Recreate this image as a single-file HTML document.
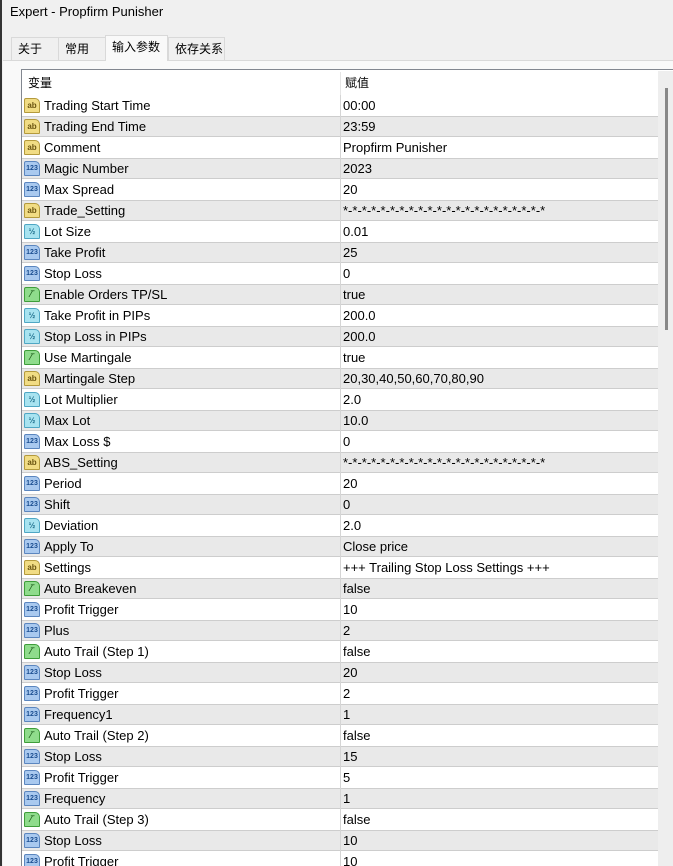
<!DOCTYPE html>
<html><head><meta charset="utf-8"><style>
*{margin:0;padding:0;box-sizing:border-box}
body{width:673px;height:866px;overflow:hidden;background:#f0f0f0;font-family:"Segoe UI","Liberation Sans","Noto Sans CJK SC",sans-serif;font-size:13px;color:#000;position:relative}
.left{position:absolute;left:0;top:0;width:2px;height:866px;background:#333}
.title{position:absolute;left:10px;top:4px;font-size:13px;color:#000}
.tab{position:absolute;top:37px;height:23px;border:1px solid #d9d9d9;border-bottom:none;background:#f0f0f0;padding:2px 0 0 6px;font-family:"Noto Sans CJK SC",sans-serif;font-size:12px}
.tab.act{top:35px;height:26px;background:#f9f9f9;z-index:2}
.panel{position:absolute;left:3px;top:60px;width:670px;height:806px;background:#f9f9f9;border-top:1px solid #d9d9d9}
.tbl{position:absolute;left:21px;top:69px;width:652px;height:797px;border:1px solid #828790;border-right:none;border-bottom:none;background:#fff;overflow:hidden}
.hdr{position:absolute;left:0;top:0;width:636px;height:25px;background:#fff}
.hdr span{position:absolute;top:4px;font-family:"Noto Sans CJK SC",sans-serif;font-size:12px}
.hdr i{position:absolute;left:318px;top:2px;width:1px;height:23px;background:#e5e5e5}
.sb{position:absolute;left:636px;top:1px;width:16px;height:796px;background:#eeeeee}
.th{position:absolute;left:643px;top:18px;width:3px;height:242px;background:#888}
.row{position:absolute;left:0;width:636px;height:21px;line-height:21px}
.row.g{background:#e9e9e9;box-shadow:inset 0 1px 0 #cdcdcd,inset 0 -1px 0 #cdcdcd}
.row .n{position:absolute;left:22px;top:0;white-space:nowrap}
.row .v{position:absolute;left:321px;top:0;white-space:nowrap}
.row .d{position:absolute;left:318px;top:0;width:1px;height:21px;background:#d5d5d5}
.ic{position:absolute;left:2px;top:3px;width:16px;height:15px;border:1px solid;border-radius:2px 5px 1px 1px;font-size:8px;font-weight:bold;line-height:13px;text-align:center;font-family:"Liberation Sans",sans-serif}
.ab{background:#f1dc84;border-color:#b49a3c;color:#6a5410}
.nm{background:#a9c9ef;border-color:#5b86bf;color:#1a4d90;font-size:7px}
.dv{background:#a8e3f0;border-color:#4fa7c4;color:#1c6d8a}
.bl{background:#8fdc8c;border-color:#3e9d3a;color:#1a5a18}
</style></head><body>
<div class="left"></div>
<div class="title">Expert - Propfirm Punisher</div>
<div class="panel"></div>
<div class="tab" style="left:11px;width:48px">关于</div>
<div class="tab" style="left:58px;width:48px">常用</div>
<div class="tab act" style="left:105px;width:63px">输入参数</div>
<div class="tab" style="left:168px;width:57px">依存关系</div>
<div class="tbl">
<div class="hdr"><span style="left:6px">变量</span><i></i><span style="left:323px">赋值</span></div>
<div id="rows"></div>
<div class="sb"></div><div class="th"></div>
</div>
<script>
var d=[["ab","Trading Start Time","00:00"],["ab","Trading End Time","23:59"],["ab","Comment","Propfirm Punisher"],["nm","Magic Number","2023"],["nm","Max Spread","20"],["ab","Trade_Setting","*-*-*-*-*-*-*-*-*-*-*-*-*-*-*-*-*-*-*-*-*-*"],["dv","Lot Size","0.01"],["nm","Take Profit","25"],["nm","Stop Loss","0"],["bl","Enable Orders TP/SL","true"],["dv","Take Profit in PIPs","200.0"],["dv","Stop Loss in PIPs","200.0"],["bl","Use Martingale","true"],["ab","Martingale Step","20,30,40,50,60,70,80,90"],["dv","Lot Multiplier","2.0"],["dv","Max Lot","10.0"],["nm","Max Loss $","0"],["ab","ABS_Setting","*-*-*-*-*-*-*-*-*-*-*-*-*-*-*-*-*-*-*-*-*-*"],["nm","Period","20"],["nm","Shift","0"],["dv","Deviation","2.0"],["nm","Apply To","Close price"],["ab","Settings","+++ Trailing Stop Loss Settings +++"],["bl","Auto Breakeven","false"],["nm","Profit Trigger","10"],["nm","Plus","2"],["bl","Auto Trail (Step 1)","false"],["nm","Stop Loss","20"],["nm","Profit Trigger","2"],["nm","Frequency1","1"],["bl","Auto Trail (Step 2)","false"],["nm","Stop Loss","15"],["nm","Profit Trigger","5"],["nm","Frequency","1"],["bl","Auto Trail (Step 3)","false"],["nm","Stop Loss","10"],["nm","Profit Trigger","10"]];
var lab={ab:"ab",nm:"123",dv:"½",bl:"⁄‾"};
var h="";
d.forEach(function(r,i){
h+='<div class="row'+(i%2?' g':'')+'" style="top:'+(25+21*i)+'px"><div class="ic '+r[0]+'">'+lab[r[0]]+'</div><span class="n">'+r[1]+'</span><div class="d"></div><span class="v">'+r[2]+'</span></div>';
});
document.getElementById("rows").innerHTML=h;
</script>
</body></html>
